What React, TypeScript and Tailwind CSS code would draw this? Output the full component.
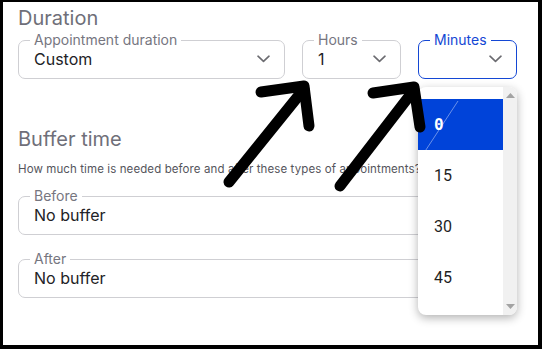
import React from "react";

const font = { fontFamily: "Inter, 'Noto Sans', sans-serif" };

const Chevron = ({ className = "" }: { className?: string }) => (
  <svg width="13" height="8" viewBox="0 0 13 8" className={className}>
    <path d="M1 1.2 L6.5 6.4 L12 1.2" fill="none" stroke="#6b6b70" strokeWidth="1.6" strokeLinecap="round" strokeLinejoin="round" />
  </svg>
);

interface SelectProps {
  label: string;
  value: string;
  width: string;
  active?: boolean;
  chevron?: boolean;
}

const Select = ({ label, value, width, active, chevron = true }: SelectProps) => (
  <fieldset
    className={`${width} rounded-[7px] border pl-[11px] pr-[14px] pb-[8px] ${
      active ? "border-[#1447d4]" : "border-[#cfcfd3]"
    }`}
  >
    <legend
      className={`px-[4px] text-[14px] leading-[16px] ${active ? "text-[#1447d4]" : "text-[#76767f]"}`}
    >
      {label}
    </legend>
    <div className="flex h-[22px] items-center justify-between pl-[4px]">
      <span className="text-[16px] text-[#222226]">{value}</span>
      {chevron && <Chevron />}
    </div>
  </fieldset>
);

const App = () => {
  const options = ["0", "15", "30", "45"];

  return (
    <div className="relative h-[349px] w-[542px] overflow-hidden bg-black" style={font}>
      <div className="relative ml-[3px] mt-[2px] h-[343px] w-[535px] bg-white pl-[15px] pt-[4px]">
        {/* Duration */}
        <h2 className="text-[20px] leading-[24px] text-[#6f6f79]">Duration</h2>
        <div className="mt-[2px] flex gap-[17px]">
          <Select label="Appointment duration" value="Custom" width="w-[267px]" />
          <Select label="Hours" value="1" width="w-[99px]" />
          <Select label="Minutes" value="" width="w-[99px]" active />
        </div>

        {/* Buffer time */}
        <h2 className="mt-[48px] text-[20px] leading-[24px] text-[#6f6f79]">Buffer time</h2>
        <p className="mt-[11px] whitespace-nowrap text-[11.5px] leading-[14px] tracking-[0.1px] text-[#55555c]">
          How much time is needed before and after these types of appointments?
        </p>
        <div className="mt-[12px] flex flex-col gap-[16px]">
          <Select label="Before" value="No buffer" width="w-[499px]" chevron={false} />
          <Select label="After" value="No buffer" width="w-[499px]" chevron={false} />
        </div>

        {/* Minutes dropdown */}
        <div className="absolute left-[415px] top-[85px] flex h-[228px] w-[99px] overflow-hidden rounded-[8px] bg-white shadow-[0_3px_10px_rgba(0,0,0,0.3)]">
          <ul className="relative flex-1 pt-[12px]" style={{ fontFamily: "Roboto, 'Liberation Sans', sans-serif" }}>
            {options.map((o, i) => (
              <li
                key={o}
                className={`flex h-[51px] items-center pl-[16px] text-[16px] ${
                  i === 0 ? "bg-[#0043d9] text-white" : "text-[#1f1f1f]"
                }`}
              >
                {i === 0 ? (
                  <span className="font-bold" style={{ fontFamily: "'DejaVu Sans Mono', monospace" }}>
                    {o}
                  </span>
                ) : (
                  o
                )}
              </li>
            ))}
            <svg className="absolute left-0 top-0" width="85" height="80" viewBox="0 0 85 80">
              <line x1="0" y1="75" x2="40" y2="14" stroke="#ffffff" strokeOpacity="0.6" strokeWidth="0.7" />
            </svg>
          </ul>
          <div className="flex w-[14px] flex-col items-center justify-between bg-[#f1f1f1] py-[6px]">
            <svg width="9" height="5" viewBox="0 0 9 5">
              <path d="M0 5 L4.5 0 L9 5 Z" fill="#a3a3a3" />
            </svg>
            <svg width="9" height="5" viewBox="0 0 9 5">
              <path d="M0 0 L4.5 5 L9 0 Z" fill="#a3a3a3" />
            </svg>
          </div>
        </div>
      </div>

      {/* Annotation arrows */}
      <svg className="pointer-events-none absolute inset-0" width="542" height="349" viewBox="0 0 542 349">
        <g fill="none" stroke="#000" strokeWidth="11" strokeLinecap="round" strokeLinejoin="round">
          <path d="M229 182 L304 89" />
          <path d="M261 92 L304 86 L309 126" />
          <path d="M340 186 L414 90" />
          <path d="M373 93 L414 87 L420 127" />
        </g>
      </svg>
    </div>
  );
};

export default App;
